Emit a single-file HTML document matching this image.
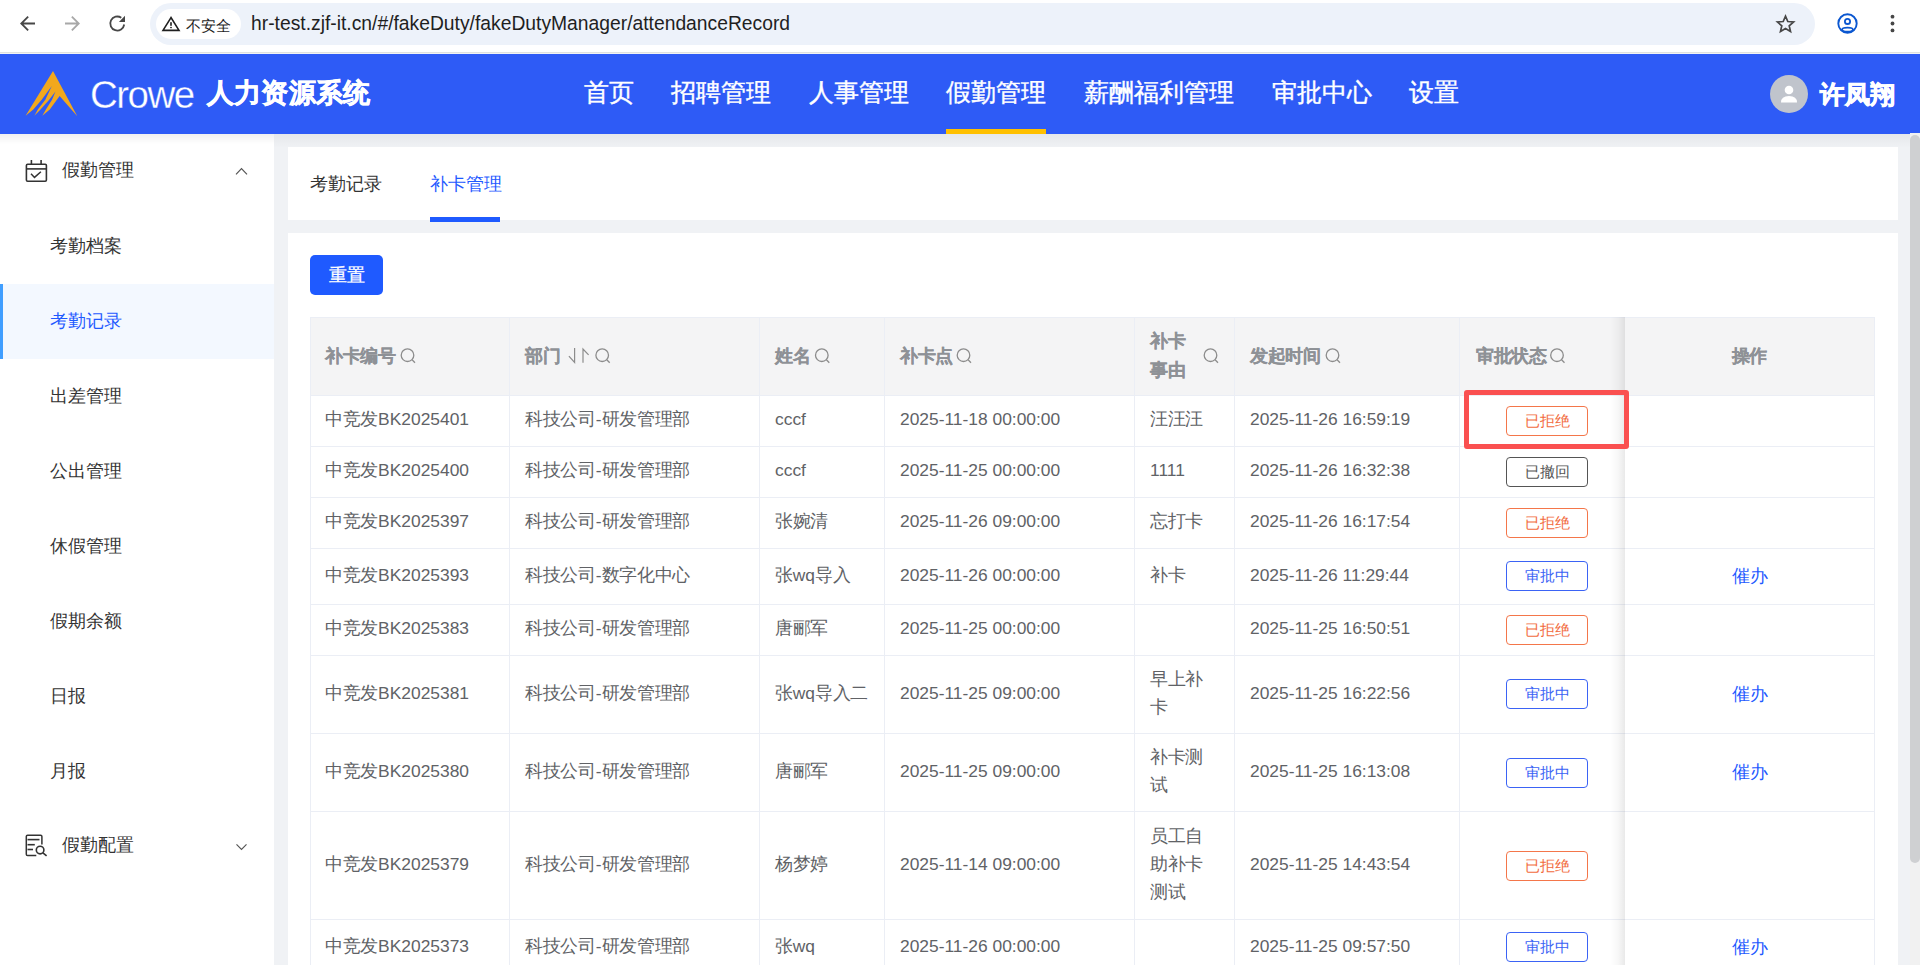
<!DOCTYPE html>
<html><head><meta charset="utf-8"><style>
*{box-sizing:border-box;margin:0;padding:0}
html,body{width:1920px;height:965px;overflow:hidden;background:#f0f2f5;font-family:"Liberation Sans",sans-serif}
.abs{position:absolute;white-space:nowrap}
.nav{position:absolute;height:80px;line-height:80px;font-size:25px;color:#fff;white-space:nowrap;-webkit-text-stroke:0.4px #fff}
.mi{position:absolute;left:0;width:274px;height:75px;line-height:75px;font-size:18px;color:#333;padding-left:50px;white-space:nowrap}
.cell{position:absolute;font-size:18px;color:#606266;white-space:nowrap;display:flex;align-items:center;line-height:28px;letter-spacing:-0.3px;padding-bottom:3px}
.l{font-size:17.4px;letter-spacing:0}
.hc{position:absolute;font-size:18px;color:#8e9196;font-weight:bold;white-space:nowrap;-webkit-text-stroke:0.15px #8e9196;letter-spacing:-0.5px}
.tag{position:absolute;width:82px;height:30px;border:1px solid;border-radius:4px;font-size:15px;line-height:27px;text-align:center;background:#fff}
.rej{border-color:#f4764a;color:#f26c3e}
.rev{border-color:#555;color:#555}
.ing{border-color:#3b63f5;color:#3b63f5}
.link{position:absolute;left:1732px;font-size:18px;color:#1f5aff;white-space:nowrap}
</style></head><body>
<div class="abs" style="left:0;top:0;width:1920px;height:53px;background:#fff"></div>
<div class="abs" style="left:0;top:52px;width:1920px;height:1px;background:#dfe1e0"></div>
<div class="abs" style="left:150px;top:3px;width:1665px;height:42px;border-radius:21px;background:#edf2fa"></div>
<div class="abs" style="left:156px;top:9px;width:85px;height:30px;border-radius:15px;background:#fff"></div>
<svg class="abs" style="left:0;top:0" width="260" height="53" viewBox="0 0 260 53">
 <path d="M35 22.5H23.6l5.2-5.2-1.3-1.3-7.5 7.5 7.5 7.5 1.3-1.3-5.2-5.2H35z" fill="#474747"/>
 <path d="M65 22.5h11.4l-5.2-5.2 1.3-1.3 7.5 7.5-7.5 7.5-1.3-1.3 5.2-5.2H65z" fill="#a8a8a8"/>
 <path d="M121.3 17.8A7 7 0 1 0 124.2 24.5" fill="none" stroke="#474747" stroke-width="1.8"/>
 <path d="M125 15.8V21.9H118.9z" fill="#474747"/>
 <path d="M171 17.6L163 30.4h16z" fill="none" stroke="#1f1f1f" stroke-width="1.6" stroke-linejoin="miter"/>
 <rect x="170.2" y="22.2" width="1.6" height="3.6" fill="#1f1f1f"/>
 <rect x="170.2" y="26.9" width="1.6" height="1.3" fill="#1f1f1f"/>
</svg>
<div class="abs" style="left:186px;top:15px;font-size:15px;line-height:22px;color:#1f1f1f">不安全</div>
<svg class="abs" style="left:1760px;top:0" width="160" height="53" viewBox="1760 0 160 53">
 <path d="M1785.5 16.2l2.3 5.3 5.8.5-4.4 3.8 1.3 5.6-5-3-5 3 1.3-5.6-4.4-3.8 5.8-.5z" fill="none" stroke="#474747" stroke-width="1.7" stroke-linejoin="miter"/>
 <circle cx="1847.5" cy="23.5" r="9.2" fill="none" stroke="#0b57d0" stroke-width="1.9"/>
 <circle cx="1847.5" cy="21.4" r="2.6" fill="none" stroke="#0b57d0" stroke-width="1.8"/>
 <ellipse cx="1847.5" cy="29.7" rx="5.4" ry="2" fill="none" stroke="#0b57d0" stroke-width="1.8"/>
 <circle cx="1892.5" cy="16.7" r="1.9" fill="#474747"/>
 <circle cx="1892.5" cy="23.5" r="1.9" fill="#474747"/>
 <circle cx="1892.5" cy="30.4" r="1.9" fill="#474747"/>
</svg>
<div class="abs" style="left:251px;top:12px;font-size:19.3px;line-height:24px;color:#1f1f1f">hr-test.zjf-it.cn/#/fakeDuty/fakeDutyManager/attendanceRecord</div>
<div class="abs" style="left:274px;top:134px;width:1646px;height:14px;background:linear-gradient(rgba(0,0,0,.045),rgba(0,0,0,0))"></div>
<div class="abs" style="left:0;top:54px;width:1920px;height:80px;background:#2e5bf6"></div>
<svg class="abs" style="left:0;top:53px" width="90" height="80" viewBox="0 53 90 80">
 <path d="M53 71 L77.3 116.3 L59.6 95.9 L56.9 99.7 L49.8 109.5 L42.3 115.8 L45.9 109.5 L52 99.7 L55.5 91.4 L49.2 99.7 L40.5 109.5 L34.4 115.8 L37.8 109.5 L45.3 99.7 L51.8 85.9 L41.7 99.7 L33.3 109.5 L25.6 115.8 Z" fill="#f2a81d"/>
</svg>
<div class="abs" style="left:90px;top:72px;font-size:38.5px;line-height:46px;color:#fff;letter-spacing:-1.5px;-webkit-text-stroke:0.35px #2e5bf6">Crowe</div>
<div class="abs" style="left:207px;top:72px;font-size:27px;line-height:42px;color:#fff;font-weight:bold;-webkit-text-stroke:0.6px #fff;letter-spacing:0.2px">人力资源系统</div>
<div class="nav" style="left:584px;top:52px">首页</div>
<div class="nav" style="left:671px;top:52px">招聘管理</div>
<div class="nav" style="left:809px;top:52px">人事管理</div>
<div class="nav" style="left:946px;top:52px">假勤管理</div>
<div class="nav" style="left:1083.5px;top:52px">薪酬福利管理</div>
<div class="nav" style="left:1272px;top:52px">审批中心</div>
<div class="nav" style="left:1409px;top:52px">设置</div>
<div class="abs" style="left:946px;top:129px;width:100px;height:5px;background:#ffc000"></div>
<div class="abs" style="left:1770px;top:75px;width:38px;height:38px;border-radius:50%;background:#c0c4cc"></div>
<svg class="abs" style="left:1770px;top:75px" width="38" height="38" viewBox="1770 75 38 38">
 <circle cx="1789" cy="90" r="4.3" fill="#fff"/>
 <path d="M1781 102.5 Q1781 96 1789 96 Q1797 96 1797 102.5 Z" fill="#fff"/>
</svg>
<div class="abs" style="left:1820px;top:73px;font-size:25px;line-height:42px;color:#fff;font-weight:bold;-webkit-text-stroke:0.8px #fff">许凤翔</div>
<div class="abs" style="left:0;top:134px;width:274px;height:831px;background:#fff"></div>
<div class="abs" style="left:0;top:134px;width:274px;height:10px;background:linear-gradient(rgba(0,0,0,.06),rgba(0,0,0,0))"></div>
<svg class="abs" style="left:0;top:133px" width="274" height="832" viewBox="0 133 274 832">
 <rect x="26.4" y="164.3" width="20" height="17" rx="1.2" fill="none" stroke="#333" stroke-width="1.6"/>
 <line x1="26.4" y1="168.9" x2="46.4" y2="168.9" stroke="#333" stroke-width="1.6"/>
 <line x1="31.4" y1="160" x2="31.4" y2="164.3" stroke="#333" stroke-width="1.6"/>
 <line x1="41.1" y1="160" x2="41.1" y2="164.3" stroke="#333" stroke-width="1.6"/>
 <path d="M31 173.8 L34.5 177.4 L40.9 171.8" fill="none" stroke="#333" stroke-width="1.5"/>
 <path d="M236 174.3 L241.5 168.6 L247 174.3" fill="none" stroke="#555" stroke-width="1.2"/>
 <path d="M36.3 855.6 H27.6 Q26.3 855.6 26.3 854.3 V836.5 Q26.3 835.2 27.6 835.2 H40.6 Q41.9 835.2 41.9 836.5 V844.5" fill="none" stroke="#333" stroke-width="1.5"/>
 <line x1="27.5" y1="839.6" x2="39.5" y2="839.6" stroke="#333" stroke-width="1.6"/>
 <line x1="27.5" y1="844.7" x2="34.8" y2="844.7" stroke="#333" stroke-width="1.6"/>
 <line x1="27.5" y1="849.5" x2="33" y2="849.5" stroke="#333" stroke-width="1.6"/>
 <circle cx="40.1" cy="850.1" r="3.8" fill="none" stroke="#333" stroke-width="1.6"/>
 <line x1="42.9" y1="852.8" x2="46.6" y2="855.9" stroke="#333" stroke-width="1.6"/>
 <path d="M236.5 844.3 L241.5 849.4 L246.5 844.3" fill="none" stroke="#555" stroke-width="1.15"/>
</svg>
<div class="mi" style="top:133px;padding-left:62px">假勤管理</div>
<div class="abs" style="left:0;top:283.5px;width:274px;height:75px;background:#f3f8ff;border-left:3px solid #409eff"></div>
<div class="mi" style="top:208.5px;color:#333">考勤档案</div>
<div class="mi" style="top:283.5px;color:#1f5aff">考勤记录</div>
<div class="mi" style="top:358.5px;color:#333">出差管理</div>
<div class="mi" style="top:433.5px;color:#333">公出管理</div>
<div class="mi" style="top:508.5px;color:#333">休假管理</div>
<div class="mi" style="top:583.5px;color:#333">假期余额</div>
<div class="mi" style="top:658.5px;color:#333">日报</div>
<div class="mi" style="top:733.5px;color:#333">月报</div>
<div class="mi" style="top:808px;padding-left:62px">假勤配置</div>
<div class="abs" style="left:288px;top:147px;width:1610px;height:73px;background:#fff"></div>
<div class="abs" style="left:288px;top:233px;width:1610px;height:732px;background:#fff"></div>
<div class="abs" style="left:310px;top:163px;font-size:18px;line-height:42px;color:#333">考勤记录</div>
<div class="abs" style="left:430px;top:163px;font-size:18px;line-height:42px;color:#1f5aff">补卡管理</div>
<div class="abs" style="left:430px;top:217px;width:70px;height:5px;background:#1f5aff"></div>
<div class="abs" style="left:310px;top:255px;width:73px;height:40px;border-radius:5px;background:#1f5aff;color:#fff;font-size:18px;line-height:40px;text-align:center;-webkit-text-stroke:0.3px #fff">重置</div>
<div class="abs" style="left:310px;top:317px;width:1565px;height:78px;background:#f4f4f5"></div>
<div class="abs" style="left:310px;top:317px;width:1565px;height:1px;background:#ebeef5"></div>
<div class="abs" style="left:310px;top:395px;width:1565px;height:1px;background:#ebeef5"></div>
<div class="abs" style="left:310px;top:446px;width:1565px;height:1px;background:#ebeef5"></div>
<div class="abs" style="left:310px;top:497px;width:1565px;height:1px;background:#ebeef5"></div>
<div class="abs" style="left:310px;top:548px;width:1565px;height:1px;background:#ebeef5"></div>
<div class="abs" style="left:310px;top:604px;width:1565px;height:1px;background:#ebeef5"></div>
<div class="abs" style="left:310px;top:655px;width:1565px;height:1px;background:#ebeef5"></div>
<div class="abs" style="left:310px;top:733px;width:1565px;height:1px;background:#ebeef5"></div>
<div class="abs" style="left:310px;top:811px;width:1565px;height:1px;background:#ebeef5"></div>
<div class="abs" style="left:310px;top:919px;width:1565px;height:1px;background:#ebeef5"></div>
<div class="abs" style="left:310px;top:317px;width:1px;height:648px;background:#ebeef5"></div>
<div class="abs" style="left:509px;top:317px;width:1px;height:648px;background:#ebeef5"></div>
<div class="abs" style="left:759px;top:317px;width:1px;height:648px;background:#ebeef5"></div>
<div class="abs" style="left:884px;top:317px;width:1px;height:648px;background:#ebeef5"></div>
<div class="abs" style="left:1134px;top:317px;width:1px;height:648px;background:#ebeef5"></div>
<div class="abs" style="left:1234px;top:317px;width:1px;height:648px;background:#ebeef5"></div>
<div class="abs" style="left:1459px;top:317px;width:1px;height:648px;background:#ebeef5"></div>
<div class="abs" style="left:1874px;top:317px;width:1px;height:648px;background:#ebeef5"></div>
<div class="abs" style="left:1610px;top:317px;width:15px;height:648px;background:linear-gradient(to right,rgba(0,0,0,0),rgba(0,0,0,.03) 55%,rgba(0,0,0,.085))"></div>
<div class="hc" style="left:325px;top:317px;height:78px;line-height:78px">补卡编号</div>
<div class="hc" style="left:525px;top:317px;height:78px;line-height:78px">部门</div>
<div class="hc" style="left:775px;top:317px;height:78px;line-height:78px">姓名</div>
<div class="hc" style="left:900px;top:317px;height:78px;line-height:78px">补卡点</div>
<div class="hc" style="left:1250px;top:317px;height:78px;line-height:78px">发起时间</div>
<div class="hc" style="left:1476px;top:317px;height:78px;line-height:78px">审批状态</div>
<div class="hc" style="left:1150px;top:327px;line-height:29px">补卡<br>事由</div>
<div class="hc" style="left:1624px;top:317px;width:250px;height:78px;line-height:78px;text-align:center">操作</div>
<svg class="abs" style="left:300px;top:317px" width="1600" height="78" viewBox="300 317 1600 78"><circle cx="407.5" cy="355.2" r="6.3" fill="none" stroke="#8c8c8c" stroke-width="1.3"/><line x1="412.1" y1="359.8" x2="415.0" y2="362.7" stroke="#8c8c8c" stroke-width="1.3"/><circle cx="602.2" cy="355.2" r="6.3" fill="none" stroke="#8c8c8c" stroke-width="1.3"/><line x1="606.8000000000001" y1="359.8" x2="609.7" y2="362.7" stroke="#8c8c8c" stroke-width="1.3"/><circle cx="821.8" cy="355.2" r="6.3" fill="none" stroke="#8c8c8c" stroke-width="1.3"/><line x1="826.4" y1="359.8" x2="829.3" y2="362.7" stroke="#8c8c8c" stroke-width="1.3"/><circle cx="963.5" cy="355.2" r="6.3" fill="none" stroke="#8c8c8c" stroke-width="1.3"/><line x1="968.1" y1="359.8" x2="971.0" y2="362.7" stroke="#8c8c8c" stroke-width="1.3"/><circle cx="1210.5" cy="355.2" r="6.3" fill="none" stroke="#8c8c8c" stroke-width="1.3"/><line x1="1215.1" y1="359.8" x2="1218.0" y2="362.7" stroke="#8c8c8c" stroke-width="1.3"/><circle cx="1332.5" cy="355.2" r="6.3" fill="none" stroke="#8c8c8c" stroke-width="1.3"/><line x1="1337.1" y1="359.8" x2="1340.0" y2="362.7" stroke="#8c8c8c" stroke-width="1.3"/><circle cx="1557" cy="355.2" r="6.3" fill="none" stroke="#8c8c8c" stroke-width="1.3"/><line x1="1561.6" y1="359.8" x2="1564.5" y2="362.7" stroke="#8c8c8c" stroke-width="1.3"/><path d="M568.9 356.2 L574.6 362.5 V347.9" fill="none" stroke="#8c8c8c" stroke-width="1.2"/><path d="M583 362.8 V349 L588.6 354.8" fill="none" stroke="#8c8c8c" stroke-width="1.2"/></svg>
<div class="cell" style="left:325px;top:395px;height:51px">中竞发<span class="l">BK2025401</span></div>
<div class="cell" style="left:525px;top:395px;height:51px">科技公司<span class="l">-</span>研发管理部</div>
<div class="cell" style="left:775px;top:395px;height:51px"><span class="l">cccf</span></div>
<div class="cell" style="left:900px;top:395px;height:51px"><span class="l">2025-11-18 00:00:00</span></div>
<div class="cell" style="left:1150px;top:395px;height:51px"><span>汪汪汪</span></div>
<div class="cell" style="left:1250px;top:395px;height:51px"><span class="l">2025-11-26 16:59:19</span></div>
<div class="tag rej" style="left:1506px;top:406px">已拒绝</div>
<div class="cell" style="left:325px;top:446px;height:51px">中竞发<span class="l">BK2025400</span></div>
<div class="cell" style="left:525px;top:446px;height:51px">科技公司<span class="l">-</span>研发管理部</div>
<div class="cell" style="left:775px;top:446px;height:51px"><span class="l">cccf</span></div>
<div class="cell" style="left:900px;top:446px;height:51px"><span class="l">2025-11-25 00:00:00</span></div>
<div class="cell" style="left:1150px;top:446px;height:51px"><span><span class="l">1111</span></span></div>
<div class="cell" style="left:1250px;top:446px;height:51px"><span class="l">2025-11-26 16:32:38</span></div>
<div class="tag rev" style="left:1506px;top:457px">已撤回</div>
<div class="cell" style="left:325px;top:497px;height:51px">中竞发<span class="l">BK2025397</span></div>
<div class="cell" style="left:525px;top:497px;height:51px">科技公司<span class="l">-</span>研发管理部</div>
<div class="cell" style="left:775px;top:497px;height:51px">张婉清</div>
<div class="cell" style="left:900px;top:497px;height:51px"><span class="l">2025-11-26 09:00:00</span></div>
<div class="cell" style="left:1150px;top:497px;height:51px"><span>忘打卡</span></div>
<div class="cell" style="left:1250px;top:497px;height:51px"><span class="l">2025-11-26 16:17:54</span></div>
<div class="tag rej" style="left:1506px;top:508px">已拒绝</div>
<div class="cell" style="left:325px;top:548px;height:56px">中竞发<span class="l">BK2025393</span></div>
<div class="cell" style="left:525px;top:548px;height:56px">科技公司<span class="l">-</span>数字化中心</div>
<div class="cell" style="left:775px;top:548px;height:56px">张<span class="l">wq</span>导入</div>
<div class="cell" style="left:900px;top:548px;height:56px"><span class="l">2025-11-26 00:00:00</span></div>
<div class="cell" style="left:1150px;top:548px;height:56px"><span>补卡</span></div>
<div class="cell" style="left:1250px;top:548px;height:56px"><span class="l">2025-11-26 11:29:44</span></div>
<div class="tag ing" style="left:1506px;top:561px">审批中</div>
<div class="link" style="top:548px;height:56px;line-height:56px">催办</div>
<div class="cell" style="left:325px;top:604px;height:51px">中竞发<span class="l">BK2025383</span></div>
<div class="cell" style="left:525px;top:604px;height:51px">科技公司<span class="l">-</span>研发管理部</div>
<div class="cell" style="left:775px;top:604px;height:51px">唐郦军</div>
<div class="cell" style="left:900px;top:604px;height:51px"><span class="l">2025-11-25 00:00:00</span></div>
<div class="cell" style="left:1250px;top:604px;height:51px"><span class="l">2025-11-25 16:50:51</span></div>
<div class="tag rej" style="left:1506px;top:615px">已拒绝</div>
<div class="cell" style="left:325px;top:655px;height:78px">中竞发<span class="l">BK2025381</span></div>
<div class="cell" style="left:525px;top:655px;height:78px">科技公司<span class="l">-</span>研发管理部</div>
<div class="cell" style="left:775px;top:655px;height:78px">张<span class="l">wq</span>导入二</div>
<div class="cell" style="left:900px;top:655px;height:78px"><span class="l">2025-11-25 09:00:00</span></div>
<div class="cell" style="left:1150px;top:655px;height:78px"><span>早上补<br>卡</span></div>
<div class="cell" style="left:1250px;top:655px;height:78px"><span class="l">2025-11-25 16:22:56</span></div>
<div class="tag ing" style="left:1506px;top:679px">审批中</div>
<div class="link" style="top:655px;height:78px;line-height:78px">催办</div>
<div class="cell" style="left:325px;top:733px;height:78px">中竞发<span class="l">BK2025380</span></div>
<div class="cell" style="left:525px;top:733px;height:78px">科技公司<span class="l">-</span>研发管理部</div>
<div class="cell" style="left:775px;top:733px;height:78px">唐郦军</div>
<div class="cell" style="left:900px;top:733px;height:78px"><span class="l">2025-11-25 09:00:00</span></div>
<div class="cell" style="left:1150px;top:733px;height:78px"><span>补卡测<br>试</span></div>
<div class="cell" style="left:1250px;top:733px;height:78px"><span class="l">2025-11-25 16:13:08</span></div>
<div class="tag ing" style="left:1506px;top:758px">审批中</div>
<div class="link" style="top:733px;height:78px;line-height:78px">催办</div>
<div class="cell" style="left:325px;top:811px;height:108px">中竞发<span class="l">BK2025379</span></div>
<div class="cell" style="left:525px;top:811px;height:108px">科技公司<span class="l">-</span>研发管理部</div>
<div class="cell" style="left:775px;top:811px;height:108px">杨梦婷</div>
<div class="cell" style="left:900px;top:811px;height:108px"><span class="l">2025-11-14 09:00:00</span></div>
<div class="cell" style="left:1150px;top:811px;height:108px"><span>员工自<br>助补卡<br>测试</span></div>
<div class="cell" style="left:1250px;top:811px;height:108px"><span class="l">2025-11-25 14:43:54</span></div>
<div class="tag rej" style="left:1506px;top:851px">已拒绝</div>
<div class="cell" style="left:325px;top:919px;height:56px">中竞发<span class="l">BK2025373</span></div>
<div class="cell" style="left:525px;top:919px;height:56px">科技公司<span class="l">-</span>研发管理部</div>
<div class="cell" style="left:775px;top:919px;height:56px">张<span class="l">wq</span></div>
<div class="cell" style="left:900px;top:919px;height:56px"><span class="l">2025-11-26 00:00:00</span></div>
<div class="cell" style="left:1250px;top:919px;height:56px"><span class="l">2025-11-25 09:57:50</span></div>
<div class="tag ing" style="left:1506px;top:932px">审批中</div>
<div class="link" style="top:919px;height:56px;line-height:56px">催办</div>
<div class="abs" style="left:1464px;top:390px;width:165px;height:59px;border:5px solid #fa5050;border-radius:3px"></div>
<div class="abs" style="left:1910px;top:133px;width:10px;height:832px;background:#f1f1f1"></div>
<div class="abs" style="left:1910px;top:135px;width:10px;height:728px;border-radius:5px;background:#cfd0d2"></div>
</body></html>
